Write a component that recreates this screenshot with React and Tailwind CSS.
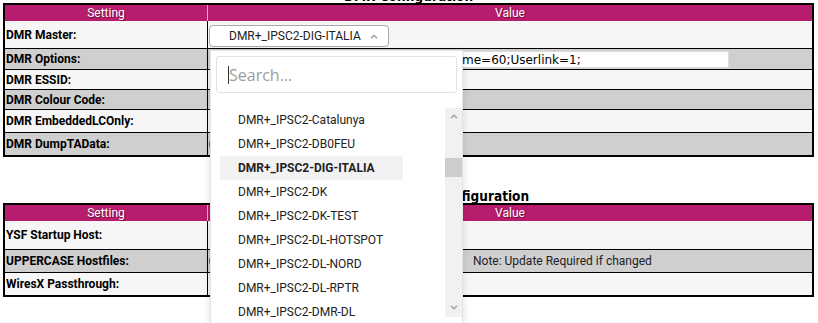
import React from "react";

const ITEMS = [
  "DMR+_IPSC2-Catalunya",
  "DMR+_IPSC2-DB0FEU",
  "DMR+_IPSC2-DIG-ITALIA",
  "DMR+_IPSC2-DK",
  "DMR+_IPSC2-DK-TEST",
  "DMR+_IPSC2-DL-HOTSPOT",
  "DMR+_IPSC2-DL-NORD",
  "DMR+_IPSC2-DL-RPTR",
  "DMR+_IPSC2-DMR-DL",
  "DMR+_IPSC2-DMR-DL2",
];

function Chevron({ up = true, className = "" }) {
  return (
    <svg width="8" height="5" viewBox="0 0 8 5" className={className}>
      <polyline
        points={up ? "1,4.2 4,1.2 7,4.2" : "1,0.8 4,3.8 7,0.8"}
        fill="none"
        stroke="currentColor"
        strokeWidth="1.4"
      />
    </svg>
  );
}

function Title({ children }) {
  return (
    <div className="h-[16px] leading-[19px] text-center text-[13.5px] font-bold text-black font-['DejaVu_Sans_Condensed','DejaVu_Sans',sans-serif] font-stretch-condensed">
      {children}
    </div>
  );
}

function Header() {
  return (
    <div className="grid grid-cols-[203px_1fr] h-[16px] bg-[#b81c6c] text-white text-[12px] leading-[16px] text-center [text-shadow:1px_1px_1px_rgba(0,0,0,0.45)]">
      <div className="border-r border-[#e4b0c8]">Setting</div>
      <div>Value</div>
    </div>
  );
}

function Row({ label, h, gray, first, children, cellClass = "" }) {
  return (
    <div
      className={`grid grid-cols-[203px_1fr] ${first ? "" : "border-t border-black"} ${
        gray ? "bg-[#cfcfcf]" : "bg-[#f6f6f6]"
      }`}
      style={{ height: h }}
    >
      <div className="border-r border-black flex items-center pl-[1px] text-[12px] font-bold text-black">
        {label}
      </div>
      <div className={`relative ${cellClass}`}>{children}</div>
    </div>
  );
}

function Dropdown() {
  return (
    <>
      <div className="ml-[1px] mt-[4px] w-[180px] h-[22px] bg-white border border-[#a9a9a9] rounded-[4px] flex items-center pl-[19px] pr-[10px] text-[12px] text-[#222]">
        <span>DMR+_IPSC2-DIG-ITALIA</span>
        <Chevron up className="ml-auto text-[#9a9a9a]" />
      </div>
      <div className="absolute left-[2px] top-[29px] z-10 w-[253px] h-[290px] bg-white border border-[#e4e4e4] shadow-[0_2px_8px_rgba(0,0,0,0.12)]">
        <div className="ml-[5px] mt-[5px] w-[241px] h-[37px] border border-[#e2e2e2] rounded-[3px] flex items-center pl-[11px] font-['Open_Sans',sans-serif]">
          <span className="w-[1px] h-[18px] bg-[#333]" />
          <span className="text-[16px] text-[#9d9d9d]">Search...</span>
        </div>
        <div className="mt-[15px] flex h-[209px] overflow-hidden">
          <div className="flex-1 pl-[9px]">
            {ITEMS.map((it, i) => (
              <div
                key={it}
                className={`w-[183px] h-[24px] leading-[24px] pl-[18px] text-[12px] text-[#222] whitespace-nowrap ${
                  i === 2 ? "bg-[#f2f2f2] font-bold" : ""
                }`}
              >
                {it}
              </div>
            ))}
          </div>
          <div className="w-[17px] bg-[#f1f1f1] relative flex flex-col items-center">
            <div className="h-[17px] flex items-center justify-center text-[#a3a3a3]">
              <Chevron up />
            </div>
            <div className="absolute top-[50px] left-0 w-[17px] h-[19px] bg-[#cdcdcd]" />
            <div className="mt-auto h-[17px] mb-[1px] flex items-center justify-center text-[#a3a3a3]">
              <Chevron up={false} />
            </div>
          </div>
        </div>
      </div>
    </>
  );
}

export default function App() {
  return (
    <div className="w-[818px] h-[323px] overflow-hidden bg-white font-['Roboto',sans-serif]">
      <div className="pl-[3px] pr-[4px] -mt-[13px]">
        <Title>DMR Configuration</Title>
        <div className="border-2 border-black">
          <Header />
          <Row label="DMR Master:" h={27} first>
            <Dropdown />
          </Row>
          <Row label="DMR Options:" h={21} gray>
            <div className="ml-[3px] mt-[2px] w-[518px] h-[17px] bg-white border border-[#dcdcdc] flex items-center text-[12px] text-black font-['DejaVu_Sans',sans-serif] whitespace-nowrap overflow-hidden">
              <span className="inline-block w-[250px] overflow-hidden">Options=StartRef=4000;RelinkTi</span>
              <span>me=60;Userlink=1;</span>
            </div>
          </Row>
          <Row label="DMR ESSID:" h={20} />
          <Row label="DMR Colour Code:" h={20} gray />
          <Row label="DMR EmbeddedLCOnly:" h={23} />
          <Row label="DMR DumpTAData:" h={23} gray>
            <div className="ml-[1px] mt-[4px] w-[40px] h-[14px] rounded-full bg-[#b81c6c]" />
          </Row>
        </div>
        <div className="h-[30px]" />
        <Title>Yaesu System Fusion Configuration</Title>
        <div className="border-2 border-black">
          <Header />
          <Row label="YSF Startup Host:" h={28} first />
          <Row label="UPPERCASE Hostfiles:" h={23} gray>
            <div className="flex items-center h-full">
              <div className="ml-[1px] w-[40px] h-[14px] rounded-full bg-[#b81c6c]" />
              <span className="ml-[224px] text-[12px] text-[#222]">Note: Update Required if changed</span>
            </div>
          </Row>
          <Row label="WiresX Passthrough:" h={23} />
        </div>
      </div>
    </div>
  );
}
